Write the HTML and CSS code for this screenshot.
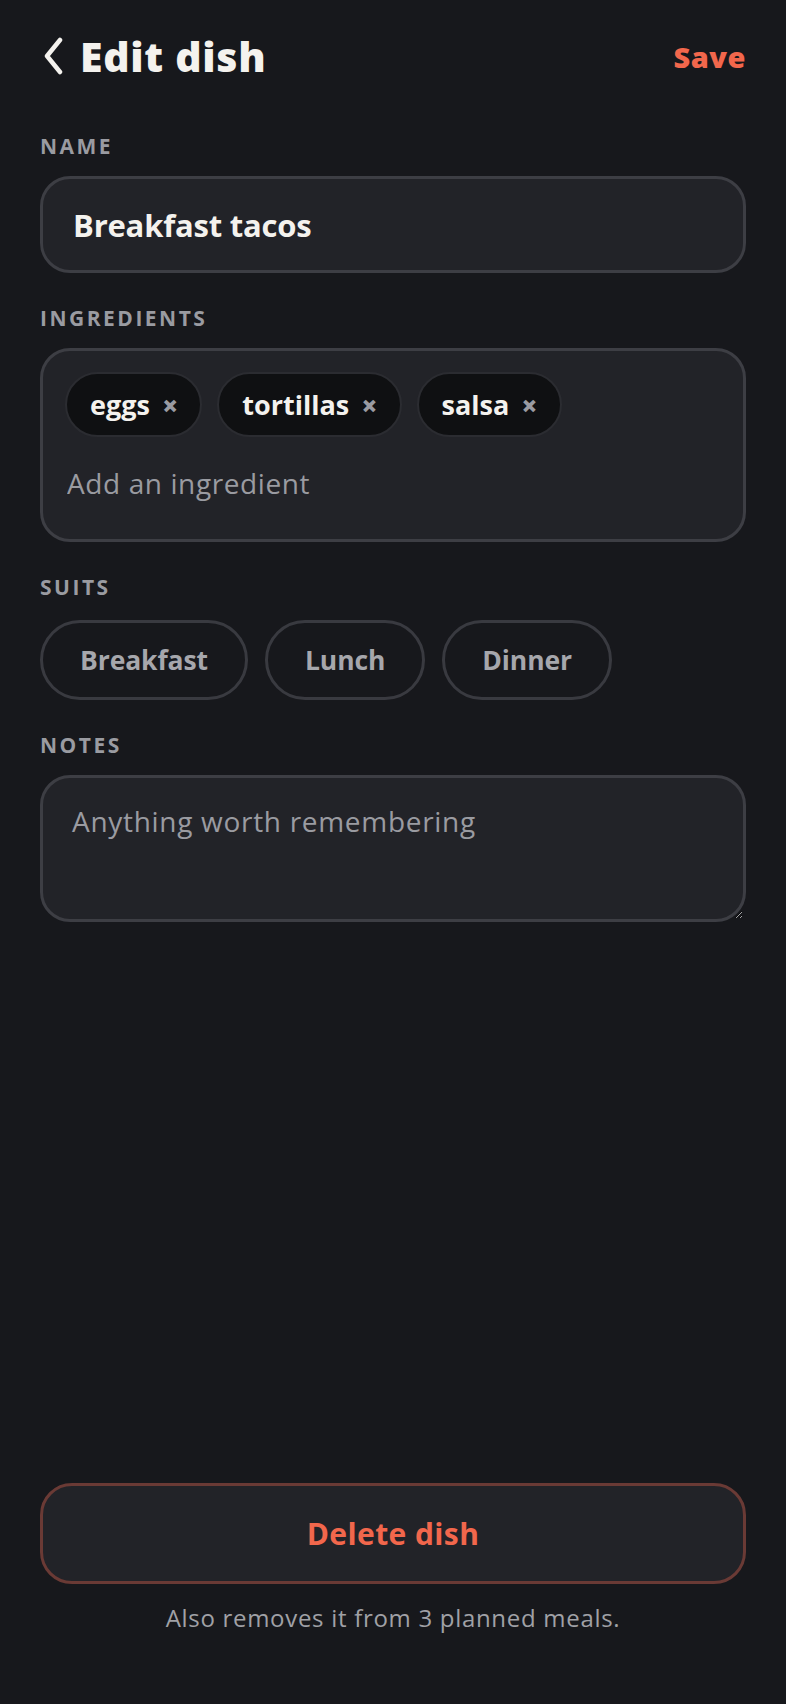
FILE: index.html
```html
<!DOCTYPE html>
<html lang="en">
<head>
<meta charset="utf-8">
<title>Edit dish</title>
<link rel="stylesheet" href="styles.css">
</head>
<body>
<div class="page">
  <main class="content">
    <header class="topbar">
      <div class="title-group">
        <button class="back" aria-label="Back">
          <svg width="20" height="38" viewBox="0 0 20 38"><polyline points="17,3 4,19 17,35" fill="none" stroke="#f4f2ee" stroke-width="4.5" stroke-linecap="round" stroke-linejoin="round"/></svg>
        </button>
        <h1 class="title">Edit dish</h1>
      </div>
      <button class="save">Save</button>
    </header>

    <section class="field-group first">
      <div class="label">NAME</div>
      <input class="text-input" type="text" value="Breakfast tacos">
    </section>

    <section class="field-group">
      <div class="label">INGREDIENTS</div>
      <div class="ingredients-box">
        <div class="chips">
          <span class="chip">eggs<span class="chip-x">×</span></span>
          <span class="chip">tortillas<span class="chip-x">×</span></span>
          <span class="chip">salsa<span class="chip-x">×</span></span>
        </div>
        <input class="add-input" type="text" placeholder="Add an ingredient">
      </div>
    </section>

    <section class="field-group">
      <div class="label">SUITS</div>
      <div class="pills">
        <button class="pill">Breakfast</button>
        <button class="pill">Lunch</button>
        <button class="pill">Dinner</button>
      </div>
    </section>

    <section class="field-group">
      <div class="label">NOTES</div>
      <textarea class="notes" placeholder="Anything worth remembering"></textarea>
    </section>
  </main>

  <footer class="footer">
    <button class="delete">Delete dish</button>
    <p class="footnote">Also removes it from 3 planned meals.</p>
  </footer>
</div>
</body>
</html>
```

FILE: styles.css
```css
* { box-sizing: border-box; }

html, body {
  margin: 0;
  padding: 0;
  background: #17181c;
}

body {
  font-family: "Open Sans", "Lato", sans-serif;
  color: #f4f2ee;
}

.page {
  min-height: 1704px;
  display: flex;
  flex-direction: column;
  padding: 0 40px 71px 40px;
}

.content {
  display: flex;
  flex-direction: column;
}

.topbar {
  display: flex;
  align-items: center;
  justify-content: space-between;
  padding-top: 32px;
  height: 80px;
}

.title-group {
  display: flex;
  align-items: center;
  gap: 17px;
}

.back {
  background: none;
  border: 0;
  padding: 0 0 0 3px;
  display: flex;
  cursor: pointer;
}

.title {
  margin: 0;
  font-size: 41px;
  line-height: 48px;
  font-weight: 800;
  letter-spacing: 0.7px;
  color: #f4f2ee;
}

.save {
  background: none;
  border: 0;
  padding: 0;
  font-family: inherit;
  font-size: 29px;
  font-weight: 800;
  letter-spacing: 0.5px;
  color: #f2674c;
  line-height: 36px;
  margin-top: 2px;
}

.field-group {
  display: flex;
  flex-direction: column;
  margin-top: 32px;
}

.field-group.first {
  margin-top: 53px;
}

.label {
  font-size: 21px;
  line-height: 26px;
  font-weight: 700;
  letter-spacing: 2.5px;
  color: #9a9ba1;
  margin-bottom: 17px;
}

.text-input {
  height: 97px;
  width: 100%;
  background: #222328;
  border: 3px solid #3d3e44;
  border-radius: 30px;
  padding: 0 29px 0 30px;
  font-family: inherit;
  font-size: 31px;
  font-weight: 700;
  letter-spacing: -0.2px;
  color: #f4f2ee;
  outline: none;
}

.ingredients-box {
  background: #222328;
  border: 3px solid #3d3e44;
  border-radius: 30px;
  padding: 21px 23px 37px 22px;
  display: flex;
  flex-direction: column;
}

.chips {
  display: flex;
  gap: 15px;
}

.chip {
  height: 65px;
  display: inline-flex;
  align-items: center;
  gap: 12px;
  padding: 0 22px 0 23px;
  background: #0f1012;
  border: 2px solid #2b2c31;
  border-radius: 33px;
  font-size: 27px;
  font-weight: 700;
  letter-spacing: 0;
  color: #f4f2ee;
}

.chip-x {
  font-size: 28px;
  font-weight: 800;
  color: #9a9ba1;
  line-height: 1;
}

.add-input {
  margin-top: 27px;
  background: transparent;
  border: 0;
  outline: none;
  padding: 0 0 0 2px;
  height: 38px;
  font-family: inherit;
  font-size: 28px;
  letter-spacing: 0.6px;
  color: #f4f2ee;
}

.add-input::placeholder,
.notes::placeholder {
  color: #9a9ba1;
  opacity: 1;
}

.pills {
  display: flex;
  gap: 17px;
  margin-top: 3px;
}

.pill {
  height: 80px;
  padding: 0 37px;
  background: transparent;
  border: 3px solid #393a40;
  border-radius: 40px;
  font-family: inherit;
  font-size: 26.5px;
  font-weight: 700;
  letter-spacing: -0.1px;
  color: #a6a7ac;
}

.notes {
  display: block;
  width: 100%;
  height: 147px;
  background: #222328;
  border: 3px solid #3d3e44;
  border-radius: 30px;
  padding: 24px 29px;
  font-family: inherit;
  font-size: 28px;
  line-height: 38px;
  letter-spacing: 0.7px;
  color: #f4f2ee;
  outline: none;
  resize: vertical;
}

.footer {
  margin-top: auto;
  display: flex;
  flex-direction: column;
  align-items: center;
}

.delete {
  width: 100%;
  height: 101px;
  background: #222328;
  border: 3px solid #6a3a35;
  border-radius: 32px;
  font-family: inherit;
  font-size: 30px;
  font-weight: 700;
  letter-spacing: 0.4px;
  color: #f2674c;
}

.footnote {
  margin: 19px 0 0 0;
  font-size: 24px;
  line-height: 30px;
  letter-spacing: 0.7px;
  color: #a0a1a6;
}
```
